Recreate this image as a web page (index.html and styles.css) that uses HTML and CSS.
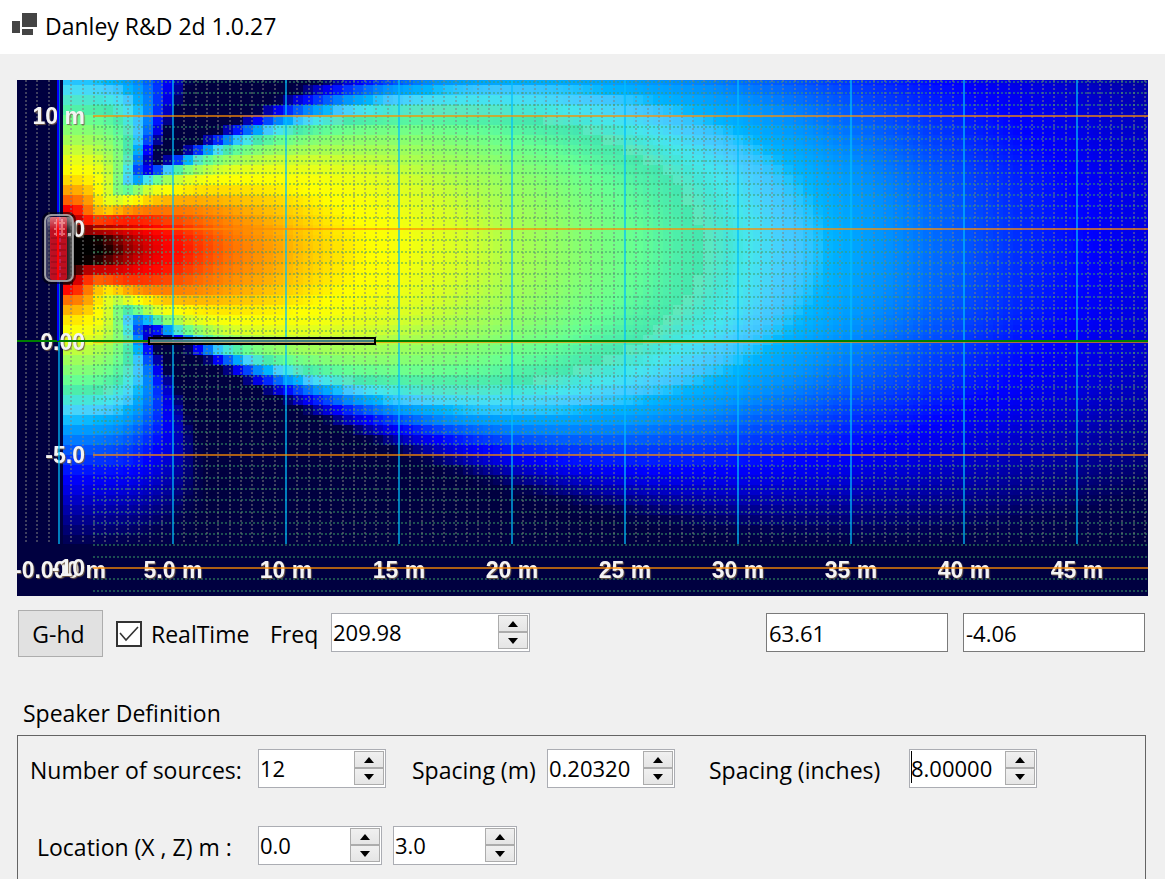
FILE: index.html
```
<!DOCTYPE html>
<html lang="en">
<head>
    <meta charset="utf-8">
    <title>Danley R&amp;D 2d 1.0.27</title>
    <meta name="viewport" content="width=device-width, initial-scale=1.0">
    <link rel="stylesheet" href="styles.css">
</head>
<body>
    <header class="titlebar">
        <svg class="app-icon" width="26" height="24" viewBox="0 0 26 24">
            <rect x="10" y="1" width="15" height="14" fill="#444"/>
            <rect x="0" y="9" width="8" height="12" fill="#444"/>
            <rect x="10" y="17" width="11" height="6" fill="#444"/>
        </svg>
        <h1>Danley R&amp;D 2d 1.0.27</h1>
    </header>

    <main class="content">
        <div class="plot">
            <canvas id="heat" width="1131" height="516"></canvas>
            <svg id="overlay" viewBox="0 0 1131 516">
                <defs>
                    <linearGradient id="glass" x1="0" y1="0" x2="1" y2="0">
                        <stop offset="0" stop-color="#8a8a98" stop-opacity=".5"/>
                        <stop offset=".3" stop-color="#15152a" stop-opacity=".6"/>
                        <stop offset=".75" stop-color="#15151a" stop-opacity=".85"/>
                        <stop offset="1" stop-color="#777" stop-opacity=".8"/>
                    </linearGradient>
                    <linearGradient id="shine" x1="0" y1="0" x2="0" y2="1">
                        <stop offset="0" stop-color="#fff" stop-opacity=".6"/>
                        <stop offset="1" stop-color="#fff" stop-opacity="0"/>
                    </linearGradient>
                </defs>
                <g id="minor"></g>
                <g id="labels"></g>
                <g id="major"></g>
                <!-- axes -->
                <path class="axis-x" d="M0 261H1131"/>
                <path class="axis-z" d="M41 0V261"/>
                <!-- audience area -->
                <rect class="audience" x="132" y="258" width="226" height="6"/>
                <path class="audience-line" d="M133 261H357"/>
                <!-- speaker -->
                <g class="speaker">
                    <rect x="27" y="134" width="30" height="68" rx="6" fill="none" stroke="#000" stroke-opacity=".55" stroke-width="4"/>
                    <rect x="28" y="135" width="28" height="66" rx="5" fill="url(#glass)"/>
                    <rect x="33" y="137" width="17" height="63" rx="2" fill="#d01020" fill-opacity=".9"/>
                    <path d="M34 158H49M34 164H49M34 170H49M34 176H49M34 182H49M34 188H49M34 194H49" stroke="#7a0814" stroke-opacity=".7"/>
                    <path d="M37 143H48M37 149H48M37 154H48M40 139V156M45 139V156" stroke="#ff9a9a" stroke-opacity=".6" stroke-width="2"/>
                    <path d="M41 137V200" stroke="#ff0000" stroke-width="2"/>
                    <path d="M43 137V200" stroke="#c050c0" stroke-opacity=".7" stroke-dasharray="4 3"/>
                    <rect x="51" y="153" width="3" height="3" fill="#b8b8b8"/>
                    <rect x="30" y="137" width="25" height="13" rx="4" fill="url(#shine)" fill-opacity=".7"/>
                    <rect x="28" y="135" width="28" height="66" rx="6" fill="none" stroke="#c4c4c4" stroke-opacity=".75" stroke-width="2"/>
                </g>
            </svg>
        </div>

        <div class="toolbar">
            <button type="button" class="btn">G-hd</button>
            <input type="checkbox" id="realtime" checked>
            <label for="realtime" class="realtime-label">RealTime</label>
            <label for="freq" class="freq-label">Freq</label>
            <span class="spin spin-wide">
                <input type="text" id="freq" value="209.98">
                <span class="arrows">
                    <button type="button" aria-label="Up"><svg width="10" height="6"><path d="M5 0L10 6H0z"/></svg></button>
                    <button type="button" aria-label="Down"><svg width="10" height="6"><path d="M0 0H10L5 6z"/></svg></button>
                </span>
            </span>
            <span class="readouts">
                <input type="text" class="box" aria-label="Cursor X" value="63.61">
                <input type="text" class="box" aria-label="Cursor Z" value="-4.06">
            </span>
        </div>

        <h2>Speaker Definition</h2>
        <section class="panel">
            <div class="row">
                <label for="sources" class="label-main">Number of sources:</label>
                <span class="spin">
                    <input type="text" id="sources" value="12">
                    <span class="arrows">
                        <button type="button" aria-label="Up"><svg width="10" height="6"><path d="M5 0L10 6H0z"/></svg></button>
                        <button type="button" aria-label="Down"><svg width="10" height="6"><path d="M0 0H10L5 6z"/></svg></button>
                    </span>
                </span>
                <label for="spacing-m" class="label-m">Spacing (m)</label>
                <span class="spin">
                    <input type="text" id="spacing-m" value="0.20320">
                    <span class="arrows">
                        <button type="button" aria-label="Up"><svg width="10" height="6"><path d="M5 0L10 6H0z"/></svg></button>
                        <button type="button" aria-label="Down"><svg width="10" height="6"><path d="M0 0H10L5 6z"/></svg></button>
                    </span>
                </span>
                <label for="spacing-in" class="label-in">Spacing (inches)</label>
                <span class="spin">
                    <input type="text" id="spacing-in" class="caret" value="8.00000">
                    <span class="arrows">
                        <button type="button" aria-label="Up"><svg width="10" height="6"><path d="M5 0L10 6H0z"/></svg></button>
                        <button type="button" aria-label="Down"><svg width="10" height="6"><path d="M0 0H10L5 6z"/></svg></button>
                    </span>
                </span>
            </div>
            <div class="row">
                <label for="loc-x" class="label-main label-indent">Location (X , Z) m :</label>
                <span class="spin spin-small">
                    <input type="text" id="loc-x" value="0.0">
                    <span class="arrows">
                        <button type="button" aria-label="Up"><svg width="10" height="6"><path d="M5 0L10 6H0z"/></svg></button>
                        <button type="button" aria-label="Down"><svg width="10" height="6"><path d="M0 0H10L5 6z"/></svg></button>
                    </span>
                </span>
                <span class="spin spin-small spin-next">
                    <input type="text" id="loc-z" aria-label="Location Z" value="3.0">
                    <span class="arrows">
                        <button type="button" aria-label="Up"><svg width="10" height="6"><path d="M5 0L10 6H0z"/></svg></button>
                        <button type="button" aria-label="Down"><svg width="10" height="6"><path d="M0 0H10L5 6z"/></svg></button>
                    </span>
                </span>
            </div>
        </section>
    </main>

    <script src="script.js"></script>
</body>
</html>
```
FILE: styles.css
```
* {
    box-sizing: border-box;
}
body {
    font-family: "Open Sans", "Noto Sans", sans-serif;
    font-size: 23px;
    line-height: 30px;
    color: #000;
    margin: 0;
    min-height: 100vh;
    display: flex;
    flex-direction: column;
    background-color: #f0f0f0;
}
h1, h2 {
    font-size: 23px;
    font-weight: normal;
    margin: 0;
}
.titlebar {
    display: flex;
    align-items: center;
    gap: 7px;
    height: 54px;
    padding: 0 12px 2px;
    background-color: #fff;
}
.app-icon {
    margin-bottom: 4px;
}
.content {
    flex: 1;
    display: flex;
    flex-direction: column;
    padding: 26px 17px 0;
}

/* plot */
.plot {
    position: relative;
    aspect-ratio: 1131 / 516;
    background-color: #000040;
    overflow: hidden;
}
.plot canvas, .plot svg {
    position: absolute;
    top: 0;
    left: 0;
    width: 100%;
    height: 100%;
}
.minor-v {
    stroke: rgba(128, 128, 128, 0.5);
    stroke-width: 2;
    stroke-dasharray: 2 2;
}
.minor-h {
    stroke: rgba(60, 160, 100, 0.5);
    stroke-width: 2;
    stroke-dasharray: 2 2;
}
.major-v {
    stroke: rgba(0, 191, 255, 0.65);
    stroke-width: 2;
}
.major-h {
    stroke: rgba(255, 140, 0, 0.68);
    stroke-width: 2;
}
.axis-x {
    stroke: #008000;
    stroke-width: 2;
}
.axis-z {
    stroke: #0000ff;
    stroke-width: 2;
}
.audience {
    fill: rgba(170, 170, 180, 0.5);
    stroke: #000;
    stroke-width: 2;
}
.audience-line {
    stroke: #408080;
    stroke-width: 2;
}
#labels text {
    font: bold 23px "Liberation Sans", Arial, sans-serif;
    fill: #f4f4f4;
    text-shadow: 1px 1px 1px rgba(120, 95, 70, 0.9);
}

/* controls */
.toolbar {
    display: flex;
    align-items: center;
    height: 47px;
    margin: 14px 3px 0 1px;
}
.btn {
    width: 85px;
    height: 47px;
    padding: 0 4px 0 0;
    font: inherit;
    background-color: #e1e1e1;
    border: 1px solid #adadad;
}
input[type="checkbox"] {
    appearance: none;
    width: 26px;
    height: 26px;
    margin: 0 9px 0 13px;
    border: 2px solid #333;
    background: #fff url("data:image/svg+xml,%3Csvg xmlns='http://www.w3.org/2000/svg' viewBox='0 0 22 22'%3E%3Cpath d='M2 10L8 17L20 4' fill='none' stroke='%23333' stroke-width='1.6'/%3E%3C/svg%3E") center / 22px 22px no-repeat;
}
.realtime-label {
    width: 119px;
}
.freq-label {
    width: 61px;
}
input[type="text"] {
    font: inherit;
    font-size: 22px;
    color: #000;
    border: 0;
    outline: 0;
    padding: 0 0 0 2px;
    background-color: #fff;
}
.spin {
    display: flex;
    width: 128px;
    height: 39px;
    padding: 1px 1px 2px;
    border: 1px solid #abadb3;
    background-color: #fff;
}
.spin input {
    flex: 1;
    min-width: 0;
    padding: 0;
}
.toolbar .spin, .toolbar .box {
    margin-bottom: 2px;
}
.spin-wide {
    width: 199px;
}
.spin-small {
    width: 124px;
}
.spin-next {
    margin-left: 11px;
}
.arrows {
    display: flex;
    flex-direction: column;
    width: 30px;
    background-color: #f0f0f0;
}
.arrows button {
    flex: 1;
    display: flex;
    align-items: center;
    justify-content: center;
    padding: 0;
    border: 1px solid #acacac;
    background: linear-gradient(#f0f0f0, #e5e5e5);
}
input.caret {
    background: linear-gradient(#000, #000) left top / 1px 32px no-repeat;
}
.readouts {
    display: flex;
    gap: 15px;
    margin-left: auto;
}
input.box {
    width: 182px;
    height: 39px;
    border: 1px solid #7a7a7a;
}

/* speaker definition */
h2 {
    margin: 41px 0 7px 6px;
}
.panel {
    flex: 1;
    margin-right: 2px;
    padding: 13px 12px 0;
    border: 1px solid #646464;
    border-bottom: 0;
}
.row {
    display: flex;
    align-items: center;
    height: 39px;
    margin-bottom: 38px;
}
.row label {
    white-space: nowrap;
    padding-top: 3px;
}
.row .label-main {
    width: 228px;
}
.row .label-indent {
    padding-left: 7px;
}
.row .label-m {
    width: 161px;
    padding-left: 26px;
}
.row .label-in {
    width: 234px;
    padding-left: 34px;
}
```
FILE: script.js
```
const W = 1131;
const PX = 113 / 5;      // pixels per metre
const FLOOR = 464;       // bottom edge of the field
const CELL = 10;
const K = 2 * Math.PI * 209.98 / 343;
const N = 12;
const SPACING = 0.2032;
const X0 = 42;           // x = 0 m
const Z0 = 169;          // centre of the array

// distance on axis (m) -> colour
const stops = [
    [1.9, 0, 0, 0], [2.3, 16, 0, 0], [2.7, 70, 0, 0], [3.2, 140, 0, 0],
    [4, 205, 0, 0], [4.9, 250, 0, 0], [5.4, 255, 10, 0], [6.5, 255, 64, 0], [7.6, 255, 108, 0],
    [9, 255, 146, 0], [10.7, 255, 190, 0], [12.5, 255, 230, 0], [13.8, 255, 255, 0],
    [15.2, 248, 255, 10], [17.9, 215, 255, 40], [20, 175, 255, 75],
    [23, 136, 255, 112], [25.6, 102, 255, 148], [27.2, 80, 240, 168],
    [28.5, 69, 230, 176], [28.51, 96, 232, 187], [29.7, 69, 230, 216],
    [30.5, 70, 230, 236], [31.3, 70, 220, 245], [32.1, 72, 205, 255],
    [32.8, 64, 198, 255], [33.5, 32, 196, 255], [34.1, 0, 180, 255],
    [35, 0, 168, 255], [36.8, 0, 144, 255], [39, 0, 104, 255],
    [41.6, 0, 60, 255], [43.4, 0, 32, 255], [45.6, 0, 0, 255],
    [48.2, 0, 0, 226], [53, 0, 0, 160], [59, 0, 0, 80], [64, 0, 0, 64]
];

function field(x, z) {
    let re = 0, im = 0;
    for (let i = 0; i < N; i++) {
        const r = Math.hypot(x, z - (i - (N - 1) / 2) * SPACING);
        re += Math.cos(K * r) / r;
        im += Math.sin(K * r) / r;
    }
    return Math.hypot(re, im) / N;
}

function colour(d) {
    if (d <= stops[0][0]) return 'rgb(0,0,0)';
    for (let i = 1; i < stops.length; i++) {
        if (d <= stops[i][0]) {
            const a = stops[i - 1], b = stops[i];
            const t = (d - a[0]) / (b[0] - a[0]);
            return 'rgb(' + [1, 2, 3].map(c => Math.round(a[c] + (b[c] - a[c]) * t)).join(',') + ')';
        }
    }
    return 'rgb(0,0,64)';
}

const ctx = document.getElementById('heat').getContext('2d');
for (let x = 46; x < W; x += CELL) {
    for (let y = -5; y < FLOOR; y += CELL) {
        const p = field((x + 5 - X0) / PX, (Z0 - y - 5) / PX);
        ctx.fillStyle = colour(1 / p);
        ctx.fillRect(x, y, CELL, Math.min(CELL, FLOOR - y));
    }
}

function add(group, tag, attrs, text) {
    const el = document.createElementNS('http://www.w3.org/2000/svg', tag);
    for (const key in attrs) el.setAttribute(key, attrs[key]);
    if (text) el.textContent = text;
    document.getElementById(group).appendChild(el);
}

// vertical lines, every 0.5 m, stronger at 5 m
for (let i = -3; i < 97; i++) {
    const x = Math.round(43 + i * 11.3);
    if (i % 10 === 0) add('major', 'path', { class: 'major-v', d: `M${x - (i ? 0 : 1)} 0V${FLOOR}` });
    else add('minor', 'path', { class: 'minor-v', d: `M${x} 0V${FLOOR}` });
}
// horizontal lines
for (let i = -3; i < 43; i++) {
    const y = Math.round(36 + i * 11.3);
    if (i % 10 === 0) add('major', 'path', { class: 'major-h', d: `M76 ${y}H${W}` });
    else add('minor', 'path', { class: 'minor-h', d: `M76 ${y}H${W}` });
}

['-0.000 m', '5.0 m', '10 m', '15 m', '20 m', '25 m', '30 m', '35 m', '40 m', '45 m'].forEach((t, i) => {
    add('labels', 'text', { x: 43 + i * 113, y: 498, 'text-anchor': 'middle' }, t);
});
['10 m', '5.0', '0.00', '-5.0', '-10'].forEach((t, i) => {
    add('labels', 'text', { x: 68, y: 44 + i * 113, 'text-anchor': 'end' }, t);
});
```
